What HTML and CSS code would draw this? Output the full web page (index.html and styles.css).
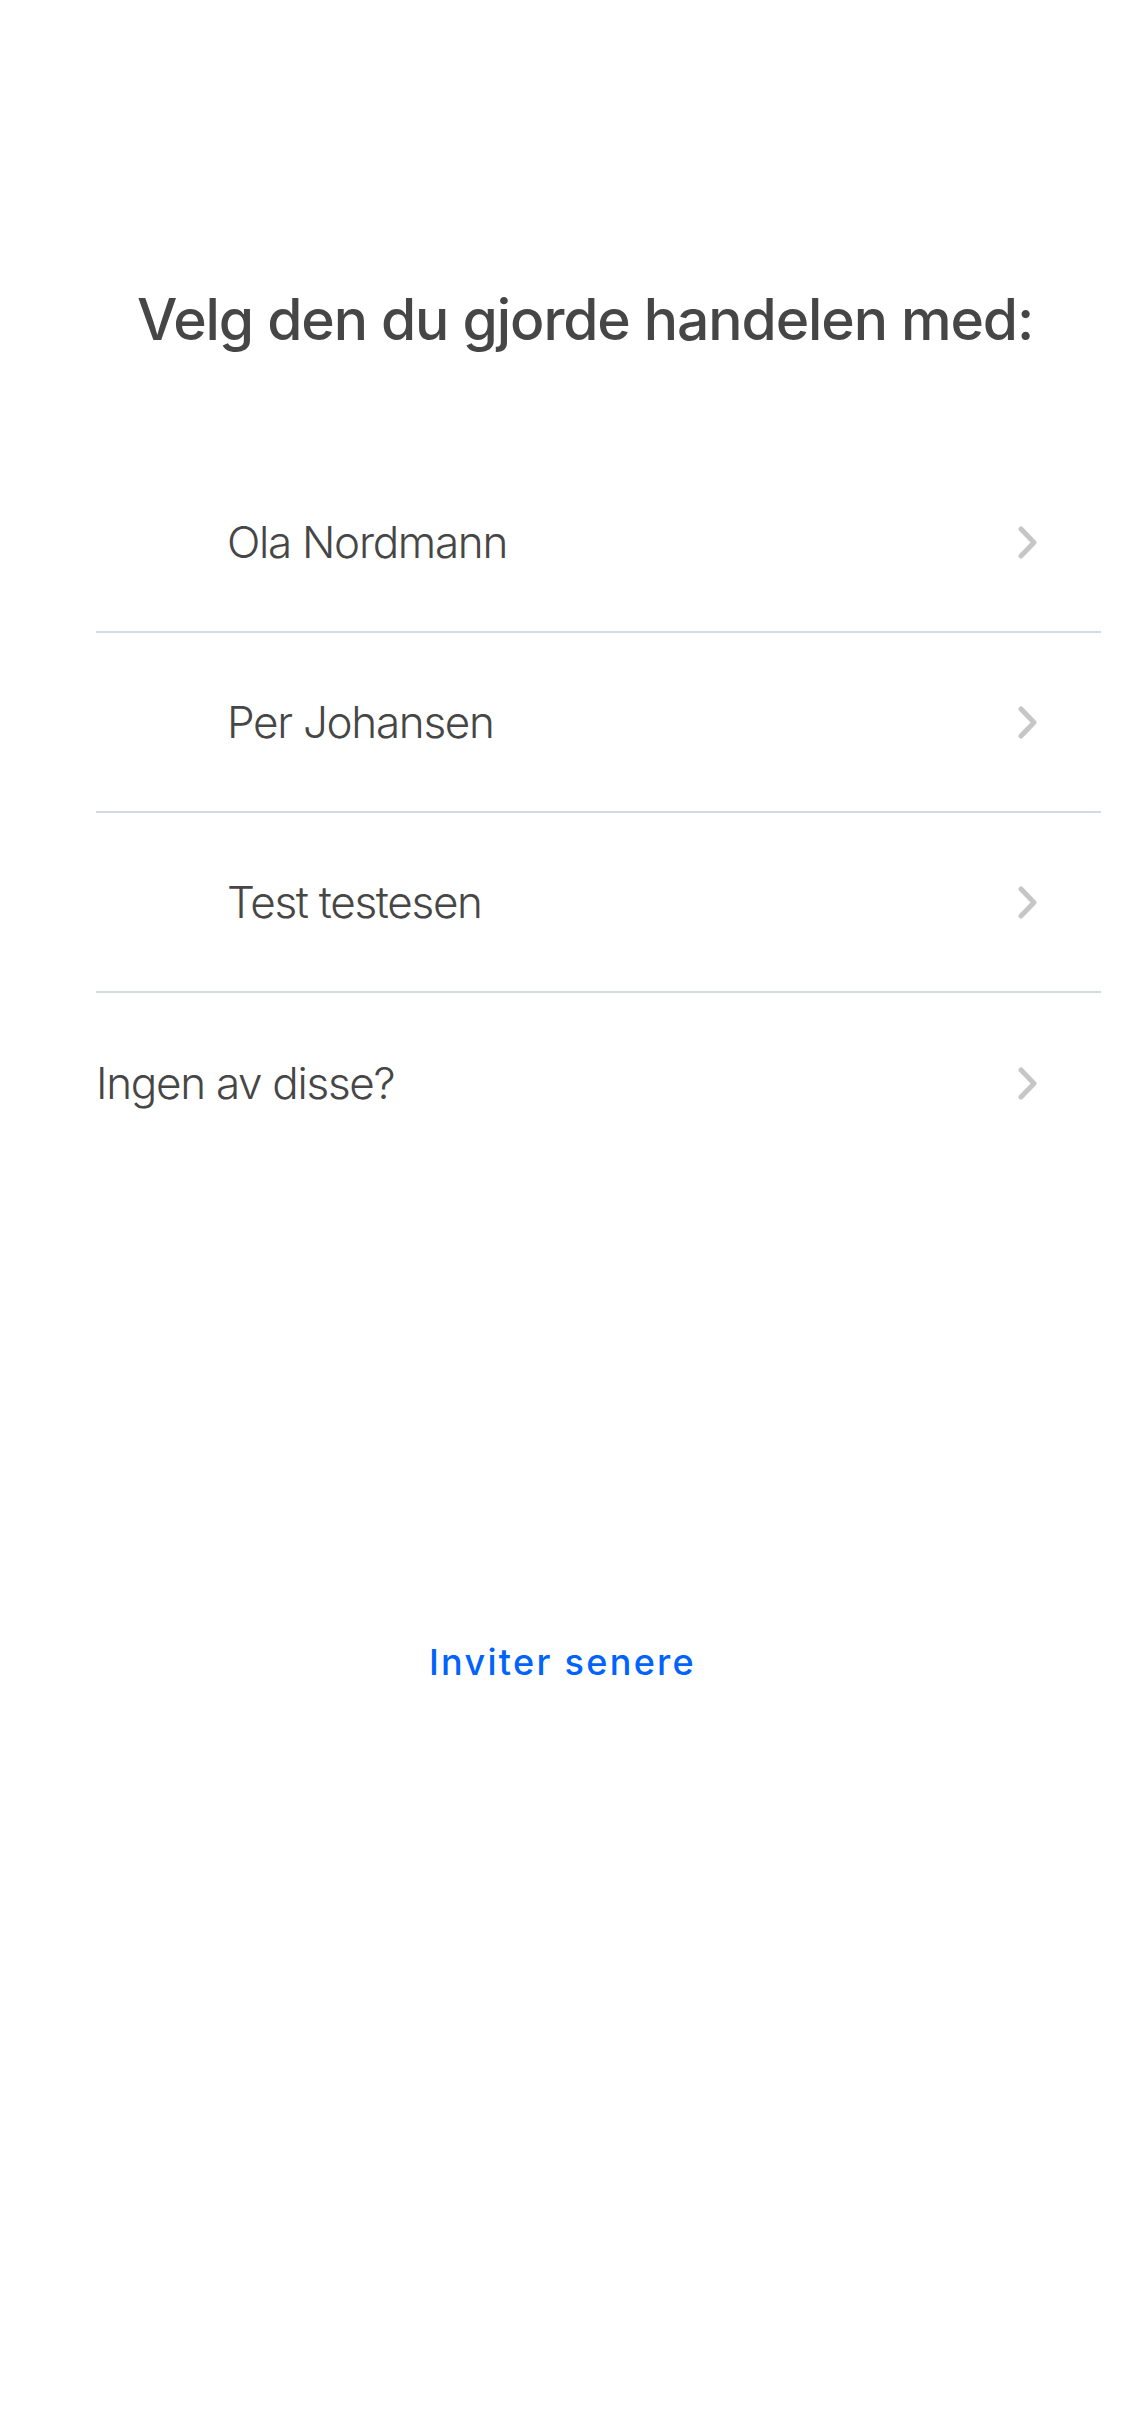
FILE: index.html
```html
<!DOCTYPE html>
<html lang="no">
<head>
<meta charset="utf-8">
<title>Velg den du gjorde handelen med</title>
<link rel="stylesheet" href="styles.css">
</head>
<body>
<main class="screen">
  <h1 class="title">Velg den du gjorde handelen med:</h1>
  <ul class="list">
    <li class="row row--person">
      <span class="row__label">Ola Nordmann</span>
      <svg class="chevron" viewBox="0 0 19 33" aria-hidden="true"><path d="M3 3 L16 16.5 L3 30"/></svg>
    </li>
    <li class="row row--person">
      <span class="row__label">Per Johansen</span>
      <svg class="chevron" viewBox="0 0 19 33" aria-hidden="true"><path d="M3 3 L16 16.5 L3 30"/></svg>
    </li>
    <li class="row row--person">
      <span class="row__label">Test testesen</span>
      <svg class="chevron" viewBox="0 0 19 33" aria-hidden="true"><path d="M3 3 L16 16.5 L3 30"/></svg>
    </li>
    <li class="row row--last">
      <span class="row__label">Ingen av disse?</span>
      <svg class="chevron" viewBox="0 0 19 33" aria-hidden="true"><path d="M3 3 L16 16.5 L3 30"/></svg>
    </li>
  </ul>
  <div class="later-wrap"><a class="later" href="#">Inviter senere</a></div>
</main>
</body>
</html>
```
FILE: styles.css
```css
* { box-sizing: border-box; }
html, body { margin: 0; padding: 0; background: #ffffff; }
body {
  width: 1125px;
  min-height: 2436px;
  font-family: Inter, "Noto Sans", sans-serif;
  color: #464646;
}
.screen {
  display: flex;
  flex-direction: column;
  padding-top: 286px;
}
.title {
  margin: 0;
  padding-left: 137px;
  font-size: 57px;
  line-height: 68px;
  font-weight: 500;
  color: #464646;
  letter-spacing: -1.1px;
  white-space: nowrap;
}
.list {
  list-style: none;
  margin: 99px 0 0 96px;
  padding: 0;
  width: 1005px;
}
.row {
  display: flex;
  align-items: center;
  justify-content: space-between;
  height: 180px;
  padding-right: 64px;
  border-bottom: 2px solid #d3dae3;
}
.row--person { padding-left: 131px; }
.row--last { border-bottom: none; padding-left: 0; }
.row__label {
  font-size: 44px;
  font-weight: 300;
  color: #464646;
  letter-spacing: -1.3px;
}
.chevron {
  width: 19px;
  height: 33px;
  fill: none;
  stroke: #c6c6c6;
  stroke-width: 5;
  stroke-linecap: round;
  stroke-linejoin: round;
}
.later-wrap {
  display: flex;
  justify-content: center;
  margin-top: 469px;
}
.later {
  font-size: 36px;
  line-height: 40px;
  font-weight: 500;
  color: #0063fb;
  letter-spacing: 2.3px;
  text-decoration: none;
}
```
